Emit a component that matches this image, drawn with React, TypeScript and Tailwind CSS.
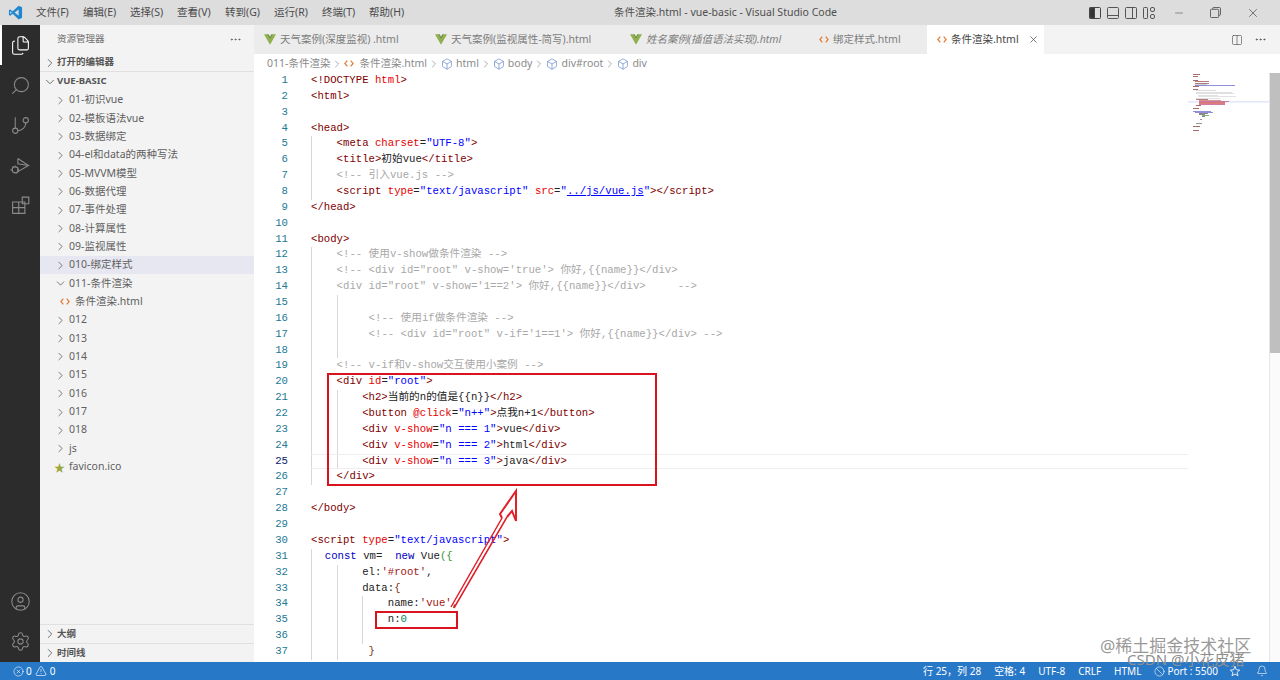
import React from "react";
import { ChevronRight, ChevronDown, MoreHorizontal, X, Minus, Columns2, Ban, Bell, Files, Search, GitBranch, CircleUser, Settings, CircleX, TriangleAlert, Box } from "lucide-react";

const UI = { fontFamily: '"Noto Sans","Noto Sans CJK SC",sans-serif' };
const MONO = { fontFamily: '"Liberation Mono","Noto Sans CJK SC",monospace' };

type Tok = [string, string];
const p = "text-[#800000]"; // punctuation tags
const t = "text-[#800000]";
const a = "text-[#e50000]";
const s = "text-[#0000ff]";
const k = "text-[#222222]";
const c = "text-[#a8a8a8]";
const b = "text-[#0000c0]";
const n = "text-[#098658]";

const LINES: { g: number[]; x?: number; ts: Tok[] }[] = [
  { g: [], ts: [[p, "<!DOCTYPE "], [a, "html"], [p, ">"]] },
  { g: [], ts: [[t, "<html>"]] },
  { g: [], ts: [] },
  { g: [], ts: [[t, "<head>"]] },
  { g: [1], ts: [[t, "<meta "], [a, "charset"], [k, "="], [s, '"UTF-8"'], [t, ">"]] },
  { g: [1], ts: [[t, "<title>"], [k, "初始vue"], [t, "</title>"]] },
  { g: [1], ts: [[c, "<!-- 引入vue.js -->"]] },
  { g: [1], ts: [[t, "<script "], [a, "type"], [k, "="], [s, '"text/javascript" '], [a, "src"], [k, "="], [s, '"'], [s + " underline", "../js/vue.js"], [s, '"'], [t, "></script>"]] },
  { g: [], ts: [[t, "</head>"]] },
  { g: [], ts: [] },
  { g: [], ts: [[t, "<body>"]] },
  { g: [1], ts: [[c, "<!-- 使用v-show做条件渲染 -->"]] },
  { g: [1], ts: [[c, `<!-- <div id="root" v-show='true'> 你好,{{name}}</div>`]] },
  { g: [1], ts: [[c, `<div id="root" v-show='1==2'> 你好,{{name}}</div>     -->`]] },
  { g: [1, 2], ts: [] },
  { g: [1, 2], x: 1, ts: [[c, "<!-- 使用if做条件渲染 -->"]] },
  { g: [1, 2], x: 1, ts: [[c, `<!-- <div id="root" v-if='1==1'> 你好,{{name}}</div> -->`]] },
  { g: [1, 2], ts: [] },
  { g: [1], ts: [[c, "<!-- v-if和v-show交互使用小案例 -->"]] },
  { g: [1], ts: [[t, "<div "], [a, "id"], [k, "="], [s, '"root"'], [t, ">"]] },
  { g: [1, 2], ts: [[t, "<h2>"], [k, "当前的n的值是{{n}}"], [t, "</h2>"]] },
  { g: [1, 2], ts: [[t, "<button "], [a, "@click"], [k, "="], [s, '"n++"'], [t, ">"], [k, "点我n+1"], [t, "</button>"]] },
  { g: [1, 2], ts: [[t, "<div "], [a, "v-show"], [k, "="], [s, '"n === 1"'], [t, ">"], [k, "vue"], [t, "</div>"]] },
  { g: [1, 2], ts: [[t, "<div "], [a, "v-show"], [k, "="], [s, '"n === 2"'], [t, ">"], [k, "html"], [t, "</div>"]] },
  { g: [1, 2], ts: [[t, "<div "], [a, "v-show"], [k, "="], [s, '"n === 3"'], [t, ">"], [k, "java"], [t, "</div>"]] },
  { g: [1], ts: [[t, "</div>"]] },
  { g: [], ts: [] },
  { g: [], ts: [[t, "</body>"]] },
  { g: [], ts: [] },
  { g: [], ts: [[t, "<script "], [a, "type"], [k, "="], [s, '"text/javascript"'], [t, ">"]] },
  { g: [], x: -1, ts: [[b, "  const "], [k, "vm=  "], [b, "new "], [k, "Vue"], ["text-[#319331]", "({"]] },
  { g: [1, 2], ts: [[k, "el:"], ["text-[#a31515]", "'#root'"], [k, ","]] },
  { g: [1, 2], ts: [[k, "data:"], ["text-[#7b3814]", "{"]] },
  { g: [1, 2, 3], ts: [[k, "name:"], ["text-[#a31515]", "'vue'"], [k, ","]] },
  { g: [1, 2, 3], ts: [[k, "n:"], [n, "0"]] },
  { g: [1, 2, 3], ts: [] },
  { g: [1, 2], x: 0, ts: [[k, " "], ["text-[#7b3814]", "}"]] },
];

const TREE = ["01-初识vue", "02-模板语法vue", "03-数据绑定", "04-el和data的两种写法", "05-MVVM模型", "06-数据代理", "07-事件处理", "08-计算属性", "09-监视属性", "010-绑定样式", "011-条件渲染"];
const TREE2 = ["012", "013", "014", "015", "016", "017", "018", "js"];

function VueIcon({ cls = "" }: { cls?: string }) {
  return (
    <svg viewBox="0 0 14 12" className={`w-[12px] h-[11px] shrink-0 ${cls}`}>
      <path d="M0 0h3.4L7 6l3.6-6H14L7 12z" fill="#8fb04a" />
      <path d="M3.4 0h2L7 2.8 8.6 0h2L7 6z" fill="#6d8f3a" />
    </svg>
  );
}
function Angle({ cls = "text-[#e37933]" }: { cls?: string }) {
  return (
    <svg viewBox="0 0 12 10" className={`w-[10px] h-[9px] shrink-0 ${cls}`} fill="none" stroke="currentColor" strokeWidth="1.4">
      <path d="M4 1.5 1 5l3 3.5M8 1.5 11 5 8 8.5" />
    </svg>
  );
}
function Tab({ w, icon, label, italic, active }: { w: string; icon: React.ReactNode; label: string; italic?: boolean; active?: boolean }) {
  return (
    <div className={`${w} h-full flex items-center gap-[4px] pl-[10px] shrink-0 ${active ? "bg-white text-[#444]" : "text-[#7d7d7d]"} ${italic ? "italic" : ""}`}>
      {icon}
      <span className="whitespace-nowrap">{label}</span>
      {active && <X className="w-[11px] h-[11px] ml-[5px] text-[#444]" strokeWidth={1.5} />}
    </div>
  );
}
function Crumb({ children }: { children: React.ReactNode }) {
  return (
    <span className="flex items-center gap-[3px]">
      <Box className="w-[12px] h-[12px] text-[#5b7fc7]" strokeWidth={1.3} />
      {children}
    </span>
  );
}
const Sep = () => <ChevronRight className="w-[12px] h-[12px] mx-[1px] text-[#8a8a8a]" strokeWidth={1.4} />;

const MINI: [number, number, number, string][] = [
  [73, 0, 7, "#8a3a3a"], [75, 0, 5, "#8a3a3a"], [79, 0, 5, "#8a3a3a"], [80, 2, 14, "#a05050"], [82, 2, 14, "#8a5a5a"], [83, 2, 12, "#c0c0c0"], [84, 2, 40, "#6a6ad0"], [85, 0, 6, "#8a3a3a"],
  [88, 0, 5, "#8a3a3a"], [89, 3, 20, "#d0d0d0"], [91, 3, 36, "#d6d6d6"], [92, 3, 38, "#d6d6d6"], [94, 5, 20, "#d8d8d8"], [95, 5, 38, "#d8d8d8"], [97, 3, 24, "#d6d6d6"], [98, 3, 12, "#a05050"],
  [99, 6, 22, "#d07070"], [100, 6, 30, "#c05080"], [101, 6, 26, "#d05050"], [102, 6, 26, "#d05050"], [103, 6, 26, "#c05080"], [104, 3, 5, "#8a3a3a"], [107, 0, 6, "#8a3a3a"], [110, 0, 18, "#6a6ad0"],
  [111, 2, 18, "#6a6ad0"], [112, 6, 9, "#606060"], [113, 6, 6, "#606060"], [114, 9, 7, "#50a050"], [115, 9, 3, "#606060"], [118, 7, 2, "#707070"], [122, 3, 6, "#707070"], [125, 0, 7, "#8a3a3a"], [129, 0, 6, "#8a3a3a"],
];

export default function App() {
  return (
    <div className="relative w-[1280px] h-[680px] overflow-hidden flex flex-col bg-white text-[10.5px]" style={UI}>
      {/* title bar */}
      <div className="relative h-[25px] shrink-0 bg-[#dddddd] flex items-center text-[#4a4a4a]">
        <svg viewBox="0 0 24 24" className="w-[15px] h-[15px] ml-[8px] mr-[13px] shrink-0">
          <path d="M17 1 7.5 10 3.5 7 1.5 8v8l2 1 4-3 9.500 9 5.500-2.500V3.500z" fill="#1f86d0" />
          <path d="M17 7 10.500 12l6.500 5z" fill="#dddddd" />
          <path d="M3.500 9.500v5L6 12z" fill="#dddddd" />
        </svg>
        <div className="flex">
          {[["文件(F)", "w-[47px]"], ["编辑(E)", "w-[47px]"], ["选择(S)", "w-[47px]"], ["查看(V)", "w-[48px]"], ["转到(G)", "w-[49px]"], ["运行(R)", "w-[48px]"], ["终端(T)", "w-[47px]"], ["帮助(H)", "w-[47px]"]].map(([m, w]) => (
            <span key={m} className={`${w} whitespace-nowrap`}>{m}</span>
          ))}
        </div>
        <div className="flex-1 text-center text-[#4f4f4f] -ml-[54px] pl-[0px]">条件渲染.html - vue-basic - Visual Studio Code</div>
        <div className="flex items-center text-[#444] pr-[20px]">
          <svg viewBox="0 0 12 12" className="w-[12px] h-[12px] mr-[6px]" fill="none" stroke="#444"><rect x=".5" y=".5" width="11" height="11" rx="1" /><rect x="1" y="1" width="4.500" height="10" fill="#333" /></svg>
          <svg viewBox="0 0 12 12" className="w-[12px] h-[12px] mr-[6px]" fill="none" stroke="#555"><rect x=".5" y=".5" width="11" height="11" rx="1" /><path d="M1 8.500h10" /></svg>
          <svg viewBox="0 0 12 12" className="w-[12px] h-[12px] mr-[6px]" fill="none" stroke="#555"><rect x=".5" y=".5" width="11" height="11" rx="1" /><path d="M7.500 1v10" /></svg>
          <svg viewBox="0 0 12 12" className="w-[12px] h-[12px] mr-[18px]" fill="none" stroke="#555"><rect x=".5" y=".5" width="4" height="11" rx=".8" /><rect x="7.500" y=".5" width="4" height="4" rx="1.500" /><rect x="7.500" y="7.500" width="4" height="4" rx="1.500" /></svg>
          <Minus className="w-[12px] h-[12px] mr-[25px] text-[#555]" strokeWidth={1.2} />
          <svg viewBox="0 0 12 12" className="w-[11px] h-[11px] mr-[25px]" fill="none" stroke="#555"><rect x=".5" y="2.500" width="9" height="9" rx="1" /><path d="M3 2.500V1.500q0-1 1-1h6q1.500 0 1.500 1.500v6q0 1-1 1h-1" /></svg>
          <X className="w-[14px] h-[14px] text-[#444]" strokeWidth={1.2} />
        </div>
      </div>

      <div className="flex flex-1 min-h-0">
        {/* activity bar */}
        <div className="w-[40px] shrink-0 bg-[#2c2c2c] flex flex-col items-center text-[#8a8a8a]">
          <div className="w-full h-[40px] flex items-center justify-center border-l-2 border-white text-white -mr-[0px]">
            <Files className="w-[21px] h-[21px] -ml-[2px]" strokeWidth={1.2} />
          </div>
          <div className="h-[40px] flex items-center justify-center"><Search className="w-[21px] h-[21px] -scale-x-100" strokeWidth={1.2} /></div>
          <div className="h-[40px] flex items-center justify-center"><GitBranch className="w-[21px] h-[21px]" strokeWidth={1.2} /></div>
          <div className="h-[40px] flex items-center justify-center">
            <svg viewBox="0 0 24 24" className="w-[21px] h-[21px]" fill="none" stroke="currentColor" strokeWidth="1.3"><path d="M9 4v6L21 12 9 19v-3" /><path d="M9 4l12 8" /><circle cx="6" cy="17" r="3.500" /><path d="M6 12v1.500M2 17H.5M3 13l1 1.500M9 14l-1 1" /></svg>
          </div>
          <div className="h-[40px] flex items-center justify-center">
            <svg viewBox="0 0 24 24" className="w-[21px] h-[21px]" fill="none" stroke="currentColor" strokeWidth="1.3"><path d="M3 8h7v13H3zM3 14.500h14V21h-7M10 8v6.500h7V8z" /><path d="M14 2.500h7.500V10H14z" /></svg>
          </div>
          <div className="flex-1" />
          <div className="h-[40px] flex items-center justify-center"><CircleUser className="w-[21px] h-[21px]" strokeWidth={1.2} /></div>
          <div className="h-[41px] flex items-center justify-center"><Settings className="w-[21px] h-[21px]" strokeWidth={1.2} /></div>
        </div>

        {/* sidebar */}
        <div className="w-[214px] shrink-0 bg-[#f3f3f3] flex flex-col text-[#616161]">
          <div className="h-[29px] shrink-0 flex items-center justify-between pl-[17px] pr-[12px] text-[9.500px] text-[#6e6e6e]">
            <span>资源管理器</span>
            <MoreHorizontal className="w-[13px] h-[13px] text-[#555]" strokeWidth={1.4} />
          </div>
          <div className="h-[18px] shrink-0 flex items-center pl-[3px] font-bold text-[9.500px] text-[#555] border-b border-[#e0e0e0]">
            <ChevronRight className="w-[14px] h-[14px] text-[#555]" strokeWidth={1.4} />
            <span className="ml-[0px]">打开的编辑器</span>
          </div>
          <div className="h-[19px] shrink-0 flex items-center pl-[3px] font-bold text-[9.500px] text-[#555]">
            <ChevronDown className="w-[14px] h-[14px] text-[#555]" strokeWidth={1.4} />
            <span>VUE-BASIC</span>
          </div>
          <div className="flex-1 text-[#5f5f5f]">
            {TREE.map((f, i) => (
              <div key={f} className={`h-[18.35px] flex items-center pl-[14px] whitespace-nowrap ${f.startsWith("010") ? "bg-[#e6e7f1]" : ""}`}>
                {f.startsWith("011") ? <ChevronDown className="w-[13px] h-[13px] text-[#555]" strokeWidth={1.4} /> : <ChevronRight className="w-[13px] h-[13px] text-[#555]" strokeWidth={1.4} />}
                <span className="ml-[2px]">{f}</span>
              </div>
            ))}
            <div className="h-[18.35px] flex items-center pl-[20px]">
              <Angle />
              <span className="ml-[5px]">条件渲染.html</span>
            </div>
            {TREE2.map((f) => (
              <div key={f} className="h-[18.35px] flex items-center pl-[14px]">
                <ChevronRight className="w-[13px] h-[13px] text-[#555]" strokeWidth={1.4} />
                <span className="ml-[2px]">{f}</span>
              </div>
            ))}
            <div className="h-[18.35px] flex items-center pl-[14px]">
              <span className="text-[#9aa83a] text-[11px] w-[13px] leading-none">★</span>
              <span className="ml-[2px]">favicon.ico</span>
            </div>
          </div>
          <div className="h-[19px] shrink-0 flex items-center pl-[3px] font-bold text-[9.500px] text-[#555] border-t border-[#e0e0e0]">
            <ChevronRight className="w-[14px] h-[14px]" strokeWidth={1.4} />
            <span>大纲</span>
          </div>
          <div className="h-[19px] shrink-0 flex items-center pl-[3px] font-bold text-[9.500px] text-[#555] border-t border-[#e0e0e0]">
            <ChevronRight className="w-[14px] h-[14px]" strokeWidth={1.4} />
            <span>时间线</span>
          </div>
        </div>

        {/* editor */}
        <div className="flex-1 min-w-0 flex flex-col">
          <div className="h-[29px] shrink-0 bg-[#ececec] flex items-center">
            <Tab w="w-[171px]" icon={<VueIcon />} label="天气案例(深度监视) .html" />
            <Tab w="w-[195px]" icon={<VueIcon />} label="天气案例(监视属性-简写).html" />
            <Tab w="w-[189px]" icon={<VueIcon />} label="姓名案例(插值语法实现).html" italic />
            <Tab w="w-[118px]" icon={<Angle />} label="绑定样式.html" />
            <Tab w="w-[117px]" icon={<Angle />} label="条件渲染.html" active />
            <div className="flex-1 h-full bg-[#f3f3f3] flex items-center justify-end pr-[13px] gap-[11px]">
              <Columns2 className="w-[12px] h-[12px] text-[#444]" strokeWidth={1.2} />
              <MoreHorizontal className="w-[13px] h-[13px] text-[#444]" strokeWidth={1.4} />
            </div>
          </div>
          <div className="h-[19px] shrink-0 flex items-center pl-[13px] text-[#8a8a8a] whitespace-nowrap">
            <span>011-条件渲染</span>
            <Sep />
            <span className="flex items-center gap-[5px]"><Angle />条件渲染.html</span>
            <Sep />
            <Crumb>html</Crumb>
            <Sep />
            <Crumb>body</Crumb>
            <Sep />
            <Crumb>div#root</Crumb>
            <Sep />
            <Crumb>div</Crumb>
          </div>
          <div className="flex-1 min-h-0 flex overflow-hidden">
            <div className="flex-1 min-w-0 pt-[0px] text-[10.67px]" style={MONO}>
              {LINES.map((l, i) => {
                const cur = i === 24;
                const levels = l.x === -1 ? 1 : 0;
                return (
                  <div key={i} className="h-[15.86px] flex leading-[15.86px] whitespace-pre">
                    <div className={`w-[34px] shrink-0 text-right ${cur ? "text-[#0b216f]" : "text-[#237893]"}`}>{i + 1}</div>
                    <div className="w-[23px] shrink-0" />
                    <div className={`flex-1 flex box-border ${cur ? "border-y border-[#eeeeee] leading-[13.86px]" : ""}`}>
                      {[1, 2, 3].filter((g) => l.g.includes(g)).map((g) => (
                        <span key={g} className="w-[25.6px] shrink-0 border-l border-[#d8d8d8]" />
                      ))}
                      {l.g.length === 0 && levels === 1 && <span className="w-0 border-l border-[#d8d8d8]" />}
                      {l.x === 1 && <span>{" "}</span>}
                      <span>
                        {l.ts.map(([cls, txt], j) => (
                          <span key={j} className={cls}>{txt}</span>
                        ))}
                      </span>
                    </div>
                  </div>
                );
              })}
            </div>
            <div className="w-[81px] shrink-0">
              <svg viewBox="0 72 81 60" className="w-[81px] h-[60px] block">
                <rect x="0" y="100.500" width="81" height="0.8" fill="#c6d4ee" />
                {MINI.map(([y, x, w, col], i) => (
                  <rect key={i} x={5 + x} y={y} width={w} height="1" fill={col} opacity="0.75" />
                ))}
              </svg>
            </div>
            <div className="w-[11px] shrink-0 border-l border-[#e6e6e6] bg-[#fbfbfb]">
              <div className="h-[280px] bg-[#bfbfbf]" />
            </div>
          </div>
        </div>
      </div>

      {/* status bar */}
      <div className="h-[18px] shrink-0 bg-[#2878c8] flex items-center text-white text-[10px] pl-[13px] whitespace-nowrap">
        <CircleX className="w-[11px] h-[11px]" strokeWidth={1.3} />
        <span className="ml-[2px]">0</span>
        <TriangleAlert className="w-[12px] h-[12px] ml-[3px]" strokeWidth={1.3} />
        <span className="ml-[3px]">0</span>
        <div className="flex-1" />
        <span>行 25，列 28</span>
        <span className="ml-[13px]">空格: 4</span>
        <span className="ml-[13px]">UTF-8</span>
        <span className="ml-[13px]">CRLF</span>
        <span className="ml-[13px]">HTML</span>
        <Ban className="w-[11px] h-[11px] ml-[13px]" strokeWidth={1.3} />
        <span className="ml-[2px]">Port : 5500</span>
        <svg viewBox="0 0 14 14" className="w-[12px] h-[12px] ml-[11px]" fill="none" stroke="white"><path d="M7 1.500 8.500 5.500 12.500 6 9.500 8.500 10.500 12.500 7 10.500 3.500 12.500 4.500 8.500 1.500 6 5.500 5.500z" /></svg>
        <Bell className="w-[12px] h-[12px] ml-[15px] mr-[12px]" strokeWidth={1.2} />
      </div>

      {/* annotations */}
      <div className="absolute left-[327px] top-[373px] w-[330px] h-[113px] border-2 border-[#d9141f]" />
      <div className="absolute left-[375px] top-[611px] w-[83px] h-[18px] border-2 border-[#d9141f]" />
      <svg className="absolute left-[440px] top-[480px] w-[90px] h-[130px]" viewBox="0 0 90 130" fill="none" stroke="#e0202a" strokeWidth="1.500">
        <path d="M11 127 62 38 M14 128 67 37" />
        <path d="M62 38 L60 34 L76 11 L76 41 L72 31 L67 37" strokeWidth="2" />
      </svg>
      <div className="absolute left-[1100px] top-[637px] text-[17px] text-[#9a9a9a] whitespace-nowrap leading-none">@稀土掘金技术社区</div>
      <div className="absolute left-[1127px] top-[652px] text-[15px] text-[#8f8f8f] whitespace-nowrap leading-none">CSDN @小花皮猪</div>
    </div>
  );
}
